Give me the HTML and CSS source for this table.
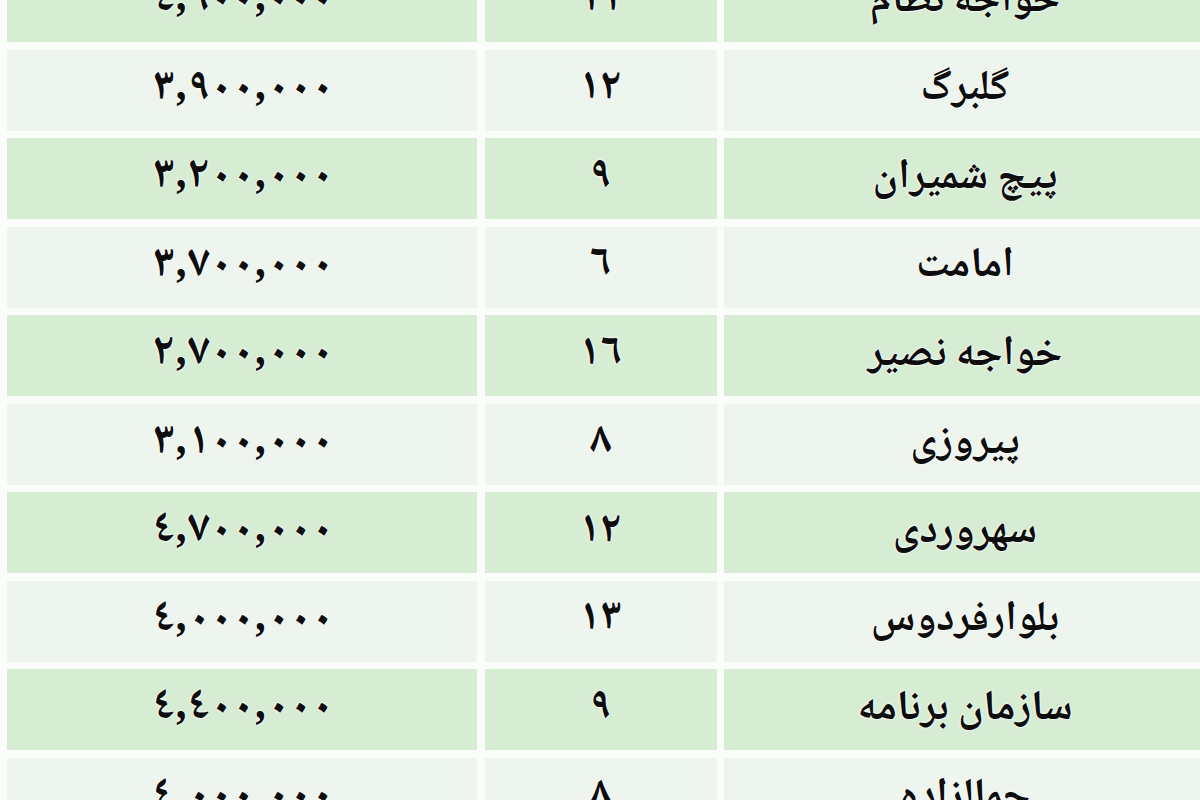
FILE: index.html
```html
<!DOCTYPE html>
<html lang="fa">
<head>
<meta charset="utf-8">
<title>قیمت مسکن</title>
<link rel="stylesheet" href="styles.css">
</head>
<body>
<div class="table" dir="rtl">
  <div class="cell name green">خواجه نظام</div><div class="cell num green">١١</div><div class="cell price green">٤,٩٠٠,٠٠٠</div>
  <div class="cell name gray">گلبرگ</div><div class="cell num gray">١٢</div><div class="cell price gray">٣,٩٠٠,٠٠٠</div>
  <div class="cell name green">پیچ شمیران</div><div class="cell num green">٩</div><div class="cell price green">٣,٢٠٠,٠٠٠</div>
  <div class="cell name gray">امامت</div><div class="cell num gray">٦</div><div class="cell price gray">٣,٧٠٠,٠٠٠</div>
  <div class="cell name green">خواجه نصیر</div><div class="cell num green">١٦</div><div class="cell price green">٢,٧٠٠,٠٠٠</div>
  <div class="cell name gray">پیروزی</div><div class="cell num gray">٨</div><div class="cell price gray">٣,١٠٠,٠٠٠</div>
  <div class="cell name green">سهروردی</div><div class="cell num green">١٢</div><div class="cell price green">٤,٧٠٠,٠٠٠</div>
  <div class="cell name gray">بلوارفردوس</div><div class="cell num gray">١٣</div><div class="cell price gray">٤,٠٠٠,٠٠٠</div>
  <div class="cell name green">سازمان برنامه</div><div class="cell num green">٩</div><div class="cell price green">٤,٤٠٠,٠٠٠</div>
  <div class="cell name gray">جمالزاده</div><div class="cell num gray">٨</div><div class="cell price gray">٤,٠٠٠,٠٠٠</div>
</div>
</body>
</html>
```
FILE: styles.css
```css
html, body {
  margin: 0;
  padding: 0;
  width: 1200px;
  height: 800px;
  overflow: hidden;
  background: #fbfdfb;
}
.table {
  display: grid;
  grid-template-columns: 482px 232px 470px;
  grid-auto-rows: 81px;
  column-gap: 7.5px;
  row-gap: 7.5px;
  width: 1199px;
  margin: -39px 0 0 7px;
  font-family: "Noto Naskh Arabic", "Noto Sans Arabic", "DejaVu Sans", sans-serif;
  font-weight: bold;
  color: #0d0d0d;
}
.cell {
  display: flex;
  align-items: center;
  justify-content: center;
  line-height: 1;
  text-shadow: 0 0 3px #fff, 0 0 2px #fff;
}
.green { background: #d6ecd3; }
.gray { background: #eef4ee; }
.price {
  direction: ltr;
  font-size: 45px;
  padding: 0 0 2px 2px;
}
.num {
  font-size: 44px;
  letter-spacing: 2px;
  padding-bottom: 2px;
}
.name {
  font-size: 42px;
  padding-bottom: 0;
}
```
